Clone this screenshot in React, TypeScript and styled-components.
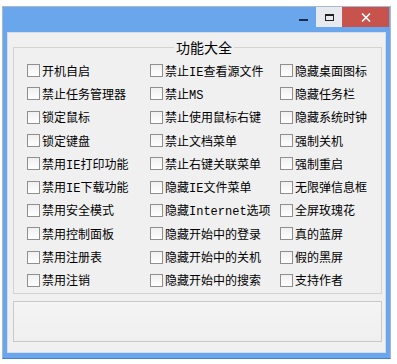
import styled, { createGlobalStyle } from "styled-components";

const columns: string[][] = [
  ["开机自启", "禁止任务管理器", "锁定鼠标", "锁定键盘", "禁用IE打印功能", "禁用IE下载功能", "禁用安全模式", "禁用控制面板", "禁用注册表", "禁用注销"],
  ["禁止IE查看源文件", "禁止MS", "禁止使用鼠标右键", "禁止文档菜单", "禁止右键关联菜单", "隐藏IE文件菜单", "隐藏Internet选项", "隐藏开始中的登录", "隐藏开始中的关机", "隐藏开始中的搜索"],
  ["隐藏桌面图标", "隐藏任务栏", "隐藏系统时钟", "强制关机", "强制重启", "无限弹信息框", "全屏玫瑰花", "真的蓝屏", "假的黑屏", "支持作者"],
];

const App = () => {
  return (
    <>
      <GlobalStyle />
      <Window>
        <TitleBar>
          <CaptionButton>
            <MinIcon />
          </CaptionButton>
          <CaptionButton $bg="#e6eaef">
            <MaxIcon />
          </CaptionButton>
          <CloseButton>
            <svg width="10" height="9" viewBox="0 0 10 9">
              <path d="M1 0.5 L9 8.5 M9 0.5 L1 8.5" stroke="#fff" strokeWidth="1.6" />
            </svg>
          </CloseButton>
        </TitleBar>
        <Client>
          <GroupBox>
            <Legend>功能大全</Legend>
            <OptionGrid>
              {columns.map((col, ci) => (
                <Column key={ci}>
                  {col.map((label) => (
                    <Option key={label}>
                      <CheckBox />
                      <span>{label}</span>
                    </Option>
                  ))}
                </Column>
              ))}
            </OptionGrid>
          </GroupBox>
          <Panel />
        </Client>
      </Window>
    </>
  );
};

export default App;

const GlobalStyle = createGlobalStyle`
  body {
    margin: 0;
    background: #fff;
    font-family: "Noto Sans CJK SC", sans-serif;
  }
`;

const Window = styled.div`
  margin: 6px 0 0 2px;
  width: 389px;
  height: 353px;
  box-sizing: border-box;
  border: 1px solid #a9b9cd;
  border-bottom-color: #4a7fc4;
  background: #6aa6ec;
  display: flex;
  flex-direction: column;
`;

const TitleBar = styled.div`
  height: 25px;
  flex: none;
  display: flex;
  justify-content: flex-end;
  align-items: flex-start;
  padding-right: 1px;
`;

const CaptionButton = styled.div<{ $bg?: string }>`
  width: 26px;
  height: 20px;
  background: ${(p) => p.$bg ?? "transparent"};
  display: flex;
  align-items: center;
  justify-content: center;
`;

const MinIcon = styled.span`
  width: 9px;
  height: 2px;
  margin-top: 5px;
  background: #1d2d48;
`;

const MaxIcon = styled.span`
  width: 9px;
  height: 7px;
  box-sizing: border-box;
  border: 1px solid #222;
  border-top-width: 2px;
`;

const CloseButton = styled.div`
  width: 47px;
  height: 20px;
  background: #c8524c;
  display: flex;
  align-items: center;
  justify-content: center;
`;

const Client = styled.div`
  flex: 1;
  margin: 0 4px 5px 4px;
  background: #f0f0f0;
  border: 1px solid #d6dde6;
  padding: 6px 3px 9px 5px;
  display: flex;
  flex-direction: column;
`;

const GroupBox = styled.fieldset`
  margin: 0;
  padding: 4px 0 1px 13px;
  border: 1px solid #d3d3d3;
  min-width: 0;
`;

const Legend = styled.legend`
  margin: 0 auto;
  padding: 0 2px;
  font-size: 14px;
  line-height: 16px;
  color: #000;
`;

const OptionGrid = styled.div`
  display: grid;
  grid-template-columns: 123px 130px 1fr;
`;

const Column = styled.div`
  display: grid;
  grid-auto-rows: 23.3px;
`;

const Option = styled.label`
  display: flex;
  align-items: center;
  gap: 2px;
  font-family: "Liberation Mono", "Noto Sans CJK SC", monospace;
  font-size: 12px;
  color: #000;
  white-space: nowrap;
`;

const CheckBox = styled.span`
  width: 13px;
  height: 13px;
  flex: none;
  box-sizing: border-box;
  border: 1px solid #8f8f8f;
  background: linear-gradient(#f0f0f0, #ffffff);
`;

const Panel = styled.div`
  margin-top: 7px;
  height: 41px;
  box-sizing: border-box;
  border: 1px solid #c9c9c9;
  background: linear-gradient(#f4f4f4, #efefef);
`;
